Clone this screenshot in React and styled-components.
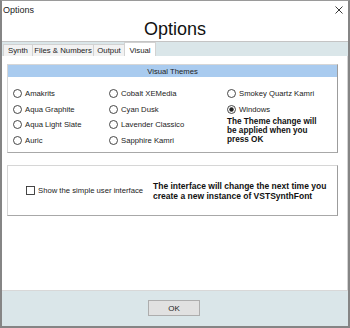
import React from 'react'
import styled, { createGlobalStyle } from 'styled-components'

const GlobalStyle = createGlobalStyle`
  html, body {
    margin: 0;
    padding: 0;
    background: #fff;
  }
  body {
    font-family: "Liberation Sans", Arial, sans-serif;
    color: #1a1a1a;
  }
`

const Window = styled.div`
  width: 350px;
  height: 328px;
  box-sizing: border-box;
  border: 2px solid #858585;
  border-top: 1px solid #9a9a9a;
  display: flex;
  flex-direction: column;
  background: #fff;
  overflow: hidden;
`

const TitleBar = styled.div`
  height: 17px;
  display: flex;
  align-items: center;
  justify-content: space-between;
  padding: 0 5px 0 1px;
  font-size: 9px;
  color: #222;
`

const Heading = styled.div`
  height: 23px;
  display: flex;
  align-items: center;
  justify-content: center;
  font-size: 18px;
  color: #111;
  padding-bottom: 1px;
  box-sizing: border-box;
`

const TabStrip = styled.div`
  height: 15px;
  box-sizing: border-box;
  border-top: 1px solid #c4c4c4;
  background: #dae6e9;
  display: flex;
  align-items: flex-end;
  padding-left: 1px;
`

const Tab = styled.div`
  width: ${p => p.w}px;
  height: ${p => (p.active ? 14 : 12)}px;
  box-sizing: border-box;
  border: 1px solid #d2d2d2;
  border-bottom: none;
  margin-right: -1px;
  background: ${p => (p.active ? '#fff' : '#f2f2f2')};
  font-size: 7.8px;
  display: flex;
  align-items: ${p => (p.active ? 'flex-start' : 'center')};
  padding-top: ${p => (p.active ? 3 : 0)}px;
  justify-content: center;
  color: #222;
  position: relative;
  z-index: ${p => (p.active ? 1 : 0)};
`

const Content = styled.div`
  flex: 1;
  background: #fff;
  border-right: 1px solid #d4d4d4;
  border-bottom: 1px solid #d8d8d8;
  padding: 8px 9px 0 5px;
  display: flex;
  flex-direction: column;
`

const Group = styled.div`
  border: 1px solid #d6d6d6;
  border-right-color: #9c9c9c;
  border-bottom-color: #a8a8a8;
  margin-top: ${p => p.gap || 0}px;
  height: ${p => p.h}px;
  box-sizing: border-box;
`

const GroupHeader = styled.div`
  height: 12px;
  background: #a9cbef;
  font-size: 7.7px;
  display: flex;
  align-items: center;
  justify-content: center;
  color: #222;
`

const ThemeGrid = styled.div`
  display: grid;
  grid-template-columns: 96px 118px 1fr;
  grid-auto-rows: 15.5px;
  padding: 9px 0 0 5px;
`

const Option = styled.label`
  display: flex;
  align-items: center;
  gap: 3px;
  font-size: 7.7px;
  color: #222;
  white-space: nowrap;
`

const Note = styled.div`
  grid-column: 3;
  grid-row: 3 / span 2;
  font-size: 8.2px;
  font-weight: bold;
  line-height: 9px;
  color: #111;
`

const InterfaceRow = styled.div`
  display: grid;
  grid-template-columns: 127px 1fr;
  align-items: center;
  height: 100%;
  padding-left: 18px;
  box-sizing: border-box;
`

const InterfaceNote = styled.div`
  font-size: 8.5px;
  font-weight: bold;
  line-height: 10px;
  color: #111;
  padding-top: 1px;
`

const Footer = styled.div`
  height: 35px;
  background: #dae6e9;
  display: flex;
  justify-content: center;
  align-items: flex-start;
  padding-top: 9px;
  box-sizing: border-box;
`

const Button = styled.div`
  width: 52px;
  height: 16px;
  box-sizing: border-box;
  margin-right: 2px;
  border: 1px solid #adadad;
  background: #e1e1e1;
  font-size: 8px;
  display: flex;
  align-items: center;
  justify-content: center;
  color: #222;
`

const Radio = ({ checked }) => (
  <svg width="9" height="9" viewBox="0 0 9 9">
    <circle cx="4.5" cy="4.5" r="4" fill="#fff" stroke="#333" strokeWidth="0.9" />
    {checked && <circle cx="4.5" cy="4.5" r="2.2" fill="#222" />}
  </svg>
)

const Checkbox = () => (
  <svg width="9" height="9" viewBox="0 0 9 9">
    <rect x="0.5" y="0.5" width="8" height="8" fill="#fff" stroke="#333" strokeWidth="0.9" />
  </svg>
)

const CloseIcon = () => (
  <svg width="8" height="8" viewBox="0 0 8 8">
    <path d="M0.5 0.5 L7.5 7.5 M7.5 0.5 L0.5 7.5" stroke="#222" strokeWidth="0.9" />
  </svg>
)

const themes = [
  ['Amakrits', 'Cobalt XEMedia', 'Smokey Quartz Kamri'],
  ['Aqua Graphite', 'Cyan Dusk', 'Windows'],
  ['Aqua Light Slate', 'Lavender Classico'],
  ['Auric', 'Sapphire Kamri'],
]

const tabs = [
  ['Synth', 30],
  ['Files & Numbers', 62],
  ['Output', 32],
  ['Visual', 32],
]

export default function App() {
  return (
    <>
      <GlobalStyle />
      <Window>
        <TitleBar>
          <span>Options</span>
          <CloseIcon />
        </TitleBar>
        <Heading>Options</Heading>
        <TabStrip>
          {tabs.map(([name, w]) => (
            <Tab key={name} w={w} active={name === 'Visual'}>
              {name}
            </Tab>
          ))}
        </TabStrip>
        <Content>
          <Group h={89}>
            <GroupHeader>Visual Themes</GroupHeader>
            <ThemeGrid>
              {themes.map(row =>
                row.map(name => (
                  <Option key={name}>
                    <Radio checked={name === 'Windows'} />
                    {name}
                  </Option>
                ))
              )}
              <Note>
                The Theme change will
                <br />
                be applied when you
                <br />
                press OK
              </Note>
            </ThemeGrid>
          </Group>
          <Group h={51} gap={12}>
            <InterfaceRow>
              <Option>
                <Checkbox />
                Show the simple user interface
              </Option>
              <InterfaceNote>
                The interface will change the next time you
                <br />
                create a new instance of VSTSynthFont
              </InterfaceNote>
            </InterfaceRow>
          </Group>
        </Content>
        <Footer>
          <Button>OK</Button>
        </Footer>
      </Window>
    </>
  )
}
